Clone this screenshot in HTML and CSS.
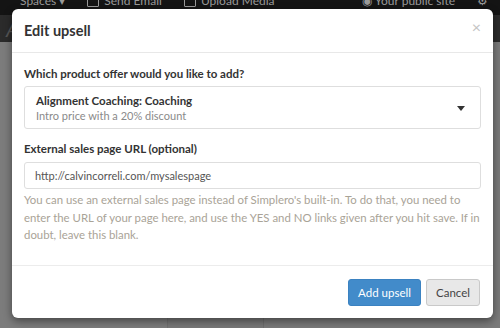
FILE: index.html
```html
<!DOCTYPE html>
<html lang="en">
<head>
  <meta charset="UTF-8" />
  <meta name="viewport" content="width=device-width, initial-scale=1.0"/>
  <title>Edit upsell</title>
  <link rel="stylesheet" href="styles.css">
</head>
<body>
  <div class="topbar">
    <span class="nav-item">Spaces &#9662;</span>
    <span class="nav-item"><span class="nav-box"></span>Send Email</span>
    <span class="nav-item"><span class="nav-box"></span>Upload Media</span>
    <span class="nav-spacer"></span>
    <span class="nav-item">&#9673; Your public site</span>
    <span class="nav-item">&#9881;</span>
  </div>
  <div class="subbar"><span class="sub-letter">A</span></div>
  <div class="content">
    <div class="col col-a"></div>
    <div class="col col-b"></div>
    <div class="col col-c"></div>
  </div>

  <div class="modal">
    <div class="modal-header">
      <h4 class="modal-title">Edit upsell</h4>
      <span class="close">&times;</span>
    </div>
    <div class="modal-body">
      <label class="field-label">Which product offer would you like to add?</label>
      <div class="select-box">
        <div class="select-text">
          <div class="select-title">Alignment Coaching: Coaching</div>
          <div class="select-sub">Intro price with a 20% discount</div>
        </div>
        <span class="caret"></span>
      </div>
      <label class="field-label">External sales page URL (optional)</label>
      <input class="text-input" type="text" value="http://calvincorreli.com/mysalespage">
      <p class="help">You can use an external sales page instead of Simplero's built-in. To do that, you need to enter the URL of your page here, and use the YES and NO links given after you hit save. If in doubt, leave this blank.</p>
    </div>
    <div class="modal-footer">
      <button class="btn btn-primary">Add upsell</button>
      <button class="btn btn-default">Cancel</button>
    </div>
  </div>
</body>
</html>
```

FILE: styles.css
```css
body {
  margin: 0;
  width: 500px;
  height: 328px;
  overflow: hidden;
  font-family: "Lato", "Liberation Sans", sans-serif;
  background-color: #7b7b7b;
  position: relative;
}
.topbar {
  height: 15px;
  background-color: #141414;
  display: flex;
  align-items: flex-end;
  gap: 22px;
  padding: 0 12px 0 20px;
  color: #9a9a9a;
  font-size: 12px;
  line-height: 12px;
  overflow: hidden;
}
.nav-item {
  display: flex;
  align-items: center;
  gap: 5px;
  white-space: nowrap;
  margin-bottom: 8px;
}
.nav-box {
  width: 10px;
  height: 9px;
  border: 1px solid #9a9a9a;
  border-radius: 1px;
}
.nav-spacer {
  flex: 1;
}
.subbar {
  height: 27px;
  background-color: #2b2b2b;
  padding-left: 6px;
}
.sub-letter {
  color: #555;
  font-size: 22px;
  font-style: italic;
  line-height: 27px;
}
.content {
  display: flex;
  height: 286px;
}
.col-a {
  width: 167px;
  background-color: #7c7c7c;
}
.col-b {
  width: 95px;
  background-color: #787878;
  border-left: 1px solid #707070;
}
.col-c {
  flex: 1;
  background-color: #7a7a7a;
  border-left: 1px solid #6e6e6e;
}

.modal {
  position: absolute;
  left: 12px;
  top: 9px;
  width: 481px;
  height: 309px;
  background-color: #fff;
  border-radius: 6px;
  box-shadow: 0 3px 8px rgba(0,0,0,0.45);
  display: flex;
  flex-direction: column;
  color: #333;
}
.modal-header {
  height: 44px;
  flex-shrink: 0;
  box-sizing: border-box;
  border-bottom: 1px solid #e8e8e8;
  display: flex;
  align-items: center;
  justify-content: space-between;
  padding: 0 12px 0 12px;
}
.modal-title {
  margin: 0;
  font-size: 14.5px;
  font-weight: 700;
  color: #333;
}
.close {
  color: #c4c4c4;
  font-size: 16px;
  margin-top: -8px;
}
.modal-body {
  flex: 1;
  padding: 13px 12px 0 12px;
  display: flex;
  flex-direction: column;
  border-bottom: 1px solid #ececec;
}
.field-label {
  font-size: 11.5px;
  font-weight: 700;
  line-height: 16px;
  margin-bottom: 4px;
}
.select-box {
  height: 43px;
  flex-shrink: 0;
  box-sizing: border-box;
  border: 1px solid #dedede;
  border-radius: 3px;
  display: flex;
  align-items: center;
  justify-content: space-between;
  padding: 0 15px 0 11px;
  margin-bottom: 12px;
}
.select-title {
  font-size: 11.5px;
  font-weight: 700;
  line-height: 15px;
}
.select-sub {
  font-size: 11px;
  color: #8a8a8a;
  line-height: 15px;
}
.caret {
  width: 0;
  height: 0;
  border-left: 4px solid transparent;
  border-right: 4px solid transparent;
  border-top: 5px solid #333;
  margin-top: 2px;
}
.text-input {
  height: 27px;
  flex-shrink: 0;
  margin-top: 1px;
  box-sizing: border-box;
  border: 1px solid #dedede;
  border-radius: 3px;
  padding: 0 10px;
  font-family: inherit;
  font-size: 11px;
  color: #555;
  outline: none;
}
.help {
  margin: 2px 0 0 0;
  font-size: 11.4px;
  line-height: 17.5px;
  color: #a9a397;
}
.modal-footer {
  height: 52px;
  flex-shrink: 0;
  box-sizing: border-box;
  display: flex;
  justify-content: flex-end;
  align-items: center;
  gap: 5px;
  padding: 0 13px 0 0;
}
.btn {
  height: 27px;
  font-family: inherit;
  font-size: 11.5px;
  border-radius: 3px;
  padding: 0;
  white-space: nowrap;
  cursor: pointer;
}
.btn-primary {
  background-color: #428bca;
  border: 1px solid #3b82c1;
  color: #fff;
  width: 73px;
}
.btn-default {
  background-color: #e8e8e8;
  border: 1px solid #c9c9c9;
  color: #444;
  width: 54px;
}
```
